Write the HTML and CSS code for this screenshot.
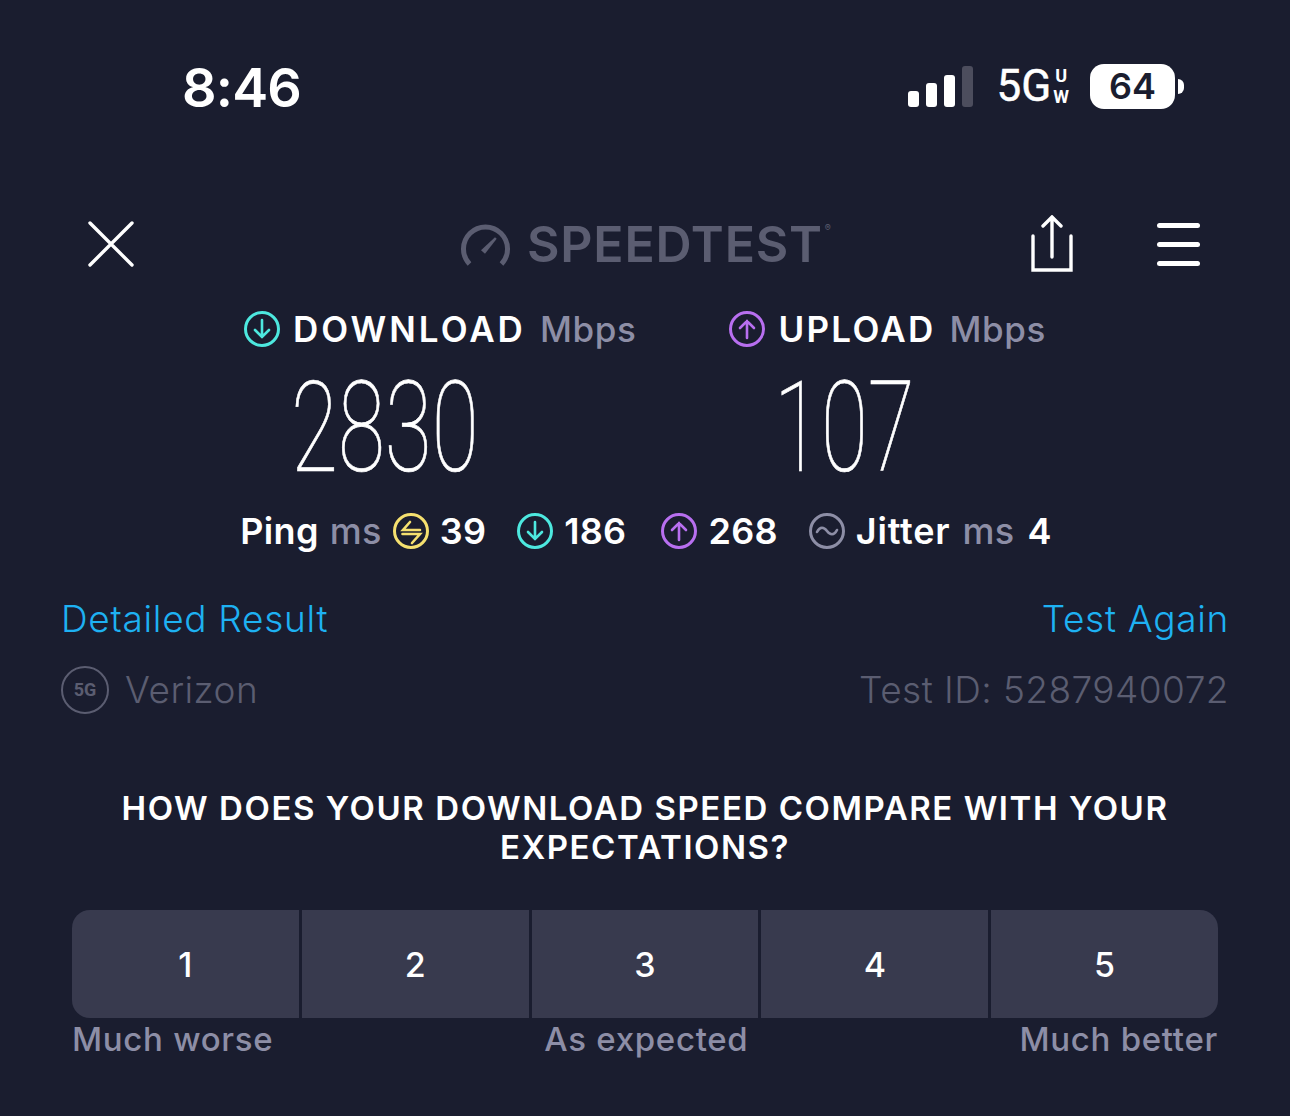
FILE: index.html
```html
<!DOCTYPE html>
<html lang="en">

<head>
    <meta charset="UTF-8">
    <meta name="viewport" content="width=device-width, initial-scale=1.0">
    <title>Speedtest Result</title>
    <link rel="stylesheet" href="styles.css">
</head>

<body>

    <!-- Status Bar -->
    <div class="status-bar">
        <div class="time">8:46</div>
        <div class="status-right">
            <div class="signal">
                <span class="bar bar-1"></span>
                <span class="bar bar-2"></span>
                <span class="bar bar-3"></span>
                <span class="bar bar-4"></span>
            </div>
            <div class="network">5G<span class="uw"><span>U</span><span>W</span></span></div>
            <div class="battery">
                <div class="battery-body">64</div>
                <div class="battery-cap"></div>
            </div>
        </div>
    </div>

    <!-- Navigation -->
    <nav class="navbar">
        <svg class="close-icon" width="46" height="46" viewBox="0 0 46 46">
            <path d="M2 2L44 44M44 2L2 44" />
        </svg>
        <div class="logo">
            <svg width="50" height="44" viewBox="0 0 50 44">
                <path class="logo-arc" d="M9.5 40A22 22 0 1 1 41.5 40" />
                <path class="logo-needle" d="M21 26.3L25 29.7L36.7 14.7L35 13.3Z" />
            </svg>
            <span class="logo-text">SPEEDTEST</span><span class="logo-mark">®</span>
        </div>
        <div class="nav-actions">
            <svg class="share-icon" width="44" height="58" viewBox="0 0 44 58">
                <path d="M21 2V42M12 11L21 2L30 11M2 21V55H40V21" />
            </svg>
            <div class="menu-icon">
                <span></span>
                <span></span>
                <span></span>
            </div>
        </div>
    </nav>

    <!-- Main Results -->
    <section class="results">
        <div class="result">
            <div class="result-head">
                <svg class="circle-icon icon-cyan" width="36" height="36" viewBox="0 0 36 36">
                    <circle cx="18" cy="18" r="16.5" />
                    <path d="M18 9V26M11 19L18 26L25 19" />
                </svg>
                <span class="head-name head-download">DOWNLOAD</span>
                <span class="head-unit">Mbps</span>
            </div>
            <div class="result-num">2830</div>
        </div>
        <div class="result">
            <div class="result-head">
                <svg class="circle-icon icon-purple" width="36" height="36" viewBox="0 0 36 36">
                    <circle cx="18" cy="18" r="16.5" />
                    <path d="M18 27V10M11 17L18 10L25 17" />
                </svg>
                <span class="head-name">UPLOAD</span>
                <span class="head-unit">Mbps</span>
            </div>
            <div class="result-num result-num-up">107</div>
        </div>
    </section>

    <!-- Ping Row -->
    <section class="stats">
        <div class="stat">
            <span>Ping</span>
            <span class="unit">ms</span>
            <svg class="circle-icon icon-yellow" width="36" height="36" viewBox="0 0 36 36">
                <circle cx="18" cy="18" r="16.5" />
                <path d="M27 17H10L17 9M9.5 21H27L19 30" />
            </svg>
            <span>39</span>
        </div>
        <div class="stat">
            <svg class="circle-icon icon-cyan" width="36" height="36" viewBox="0 0 36 36">
                <circle cx="18" cy="18" r="16.5" />
                <path d="M18 9V26M11 19L18 26L25 19" />
            </svg>
            <span>186</span>
        </div>
        <div class="stat stat-wide">
            <svg class="circle-icon icon-purple" width="36" height="36" viewBox="0 0 36 36">
                <circle cx="18" cy="18" r="16.5" />
                <path d="M18 27V10M11 17L18 10L25 17" />
            </svg>
            <span>268</span>
        </div>
        <div class="stat">
            <svg class="circle-icon icon-gray" width="36" height="36" viewBox="0 0 36 36">
                <circle cx="18" cy="18" r="16.5" />
                <path d="M8 19C11 13 15 14 18 18C21 22 25 23 28 17" />
            </svg>
            <span class="jitter">Jitter</span>
            <span class="unit">ms</span>
            <span class="jitter-val">4</span>
        </div>
    </section>

    <!-- Links -->
    <div class="links">
        <a href="#">Detailed Result</a>
        <a href="#">Test Again</a>
    </div>

    <div class="meta">
        <div class="carrier">
            <div class="carrier-badge">5G</div>
            <span>Verizon</span>
        </div>
        <div>Test ID: 5287940072</div>
    </div>

    <!-- Survey -->
    <section class="survey">
        <h2>HOW DOES YOUR DOWNLOAD SPEED COMPARE WITH YOUR EXPECTATIONS?</h2>
        <div class="rating">
            <button>1</button>
            <button>2</button>
            <button>3</button>
            <button>4</button>
            <button>5</button>
        </div>
        <div class="rating-labels">
            <span>Much worse</span>
            <span>As expected</span>
            <span>Much better</span>
        </div>
    </section>

</body>

</html>
```

FILE: styles.css
```css
/* General Styles */
body {
    font-family: "Inter", "Liberation Sans", sans-serif;
    margin: 0;
    padding: 0;
    width: 1290px;
    height: 1116px;
    overflow: hidden;
    background-color: #1a1d2f;
    color: white;
}

/* Status Bar */
.status-bar {
    display: flex;
    justify-content: space-between;
    align-items: center;
    height: 172px;
    padding: 0 106px 0 182px;
    box-sizing: border-box;
}

.time {
    margin-top: 3px;
    font-size: 54px;
    font-weight: 600;
    line-height: 1;
    letter-spacing: -0.8px;
}

.status-right {
    display: flex;
    align-items: center;
}

.signal {
    display: flex;
    align-items: flex-end;
    gap: 7px;
    height: 41px;
}

.bar {
    width: 11px;
    border-radius: 3px;
    background-color: white;
}

.bar-1 { height: 16px; }
.bar-2 { height: 24px; }
.bar-3 { height: 32px; }
.bar-4 { height: 41px; background-color: #4c4d5d; }

.network {
    display: flex;
    align-items: center;
    margin-left: 24px;
    font-family: "Roboto", sans-serif;
    font-size: 44px;
    line-height: 1;
    -webkit-text-stroke: 0.5px white;
}

.uw {
    display: flex;
    flex-direction: column;
    margin-left: 2px;
    font-size: 18px;
    font-weight: 700;
    line-height: 21px;
    text-align: center;
    -webkit-text-stroke: 0;
}

.battery {
    display: flex;
    align-items: center;
    margin-left: 21px;
}

.battery-body {
    width: 85px;
    height: 45px;
    border-radius: 14px;
    background-color: white;
    color: #1a1d2f;
    font-size: 36px;
    font-weight: 600;
    line-height: 45px;
    text-align: center;
}

.battery-cap {
    width: 6px;
    height: 15px;
    margin-left: 3px;
    border-radius: 0 8px 8px 0;
    background-color: white;
}

/* Navigation */
.navbar {
    display: flex;
    align-items: center;
    justify-content: space-between;
    height: 72px;
    padding: 0 90px 0 88px;
    margin-top: 36px;
    position: relative;
}

.close-icon path {
    fill: none;
    stroke: white;
    stroke-width: 3.4;
    stroke-linecap: round;
}

.logo {
    position: absolute;
    left: 460px;
    top: 14px;
    display: flex;
    align-items: center;
    gap: 17px;
    color: #5b5d71;
}

.logo-arc {
    fill: none;
    stroke: #5b5d71;
    stroke-width: 5;
}

.logo-needle {
    fill: #5b5d71;
}

.logo-text {
    margin-top: -3px;
    font-size: 50px;
    font-weight: 600;
    line-height: 1;
    letter-spacing: 0.8px;
}

.logo-mark {
    position: absolute;
    right: -8px;
    top: 0;
    font-size: 9px;
}

.nav-actions {
    display: flex;
    align-items: center;
    gap: 82px;
}

.share-icon path {
    fill: none;
    stroke: white;
    stroke-width: 3.4;
    stroke-linecap: round;
}

.menu-icon {
    display: flex;
    flex-direction: column;
    gap: 14px;
    width: 43px;
}

.menu-icon span {
    height: 5px;
    border-radius: 3px;
    background-color: white;
}

/* Circle Icons */
.circle-icon {
    flex-shrink: 0;
}

.circle-icon circle,
.circle-icon path {
    fill: none;
    stroke-width: 3;
    stroke-linecap: round;
}

.circle-icon path {
    stroke-width: 2.6;
}

.icon-cyan circle, .icon-cyan path { stroke: #4de8df; }
.icon-purple circle, .icon-purple path { stroke: #b86ff0; }
.icon-yellow circle, .icon-yellow path { stroke: #f5e06f; }
.icon-gray circle, .icon-gray path { stroke: #8d8ea6; }

/* Main Results */
.results {
    display: flex;
    justify-content: center;
    gap: 93px;
    margin-top: 25px;
}

.result-head {
    display: flex;
    align-items: center;
    height: 48px;
    font-size: 35px;
    line-height: 1;
}

.head-name {
    margin-left: 13px;
    font-weight: 600;
    letter-spacing: 2.3px;
}

.head-download {
    letter-spacing: 3px;
}

.head-unit {
    margin-left: 14px;
    font-weight: 500;
    letter-spacing: 0.6px;
    color: #8d8ea6;
}

.result-num {
    margin: 19px 0 0 47px;
    font-family: "Roboto", sans-serif;
    font-size: 126px;
    font-weight: 100;
    line-height: 112px;
    transform: scaleX(0.68);
    transform-origin: left center;
    white-space: nowrap;
    -webkit-text-stroke: 0.7px white;
}

.result-num-up {
    margin-left: 45px;
}

/* Ping Row */
.stats {
    display: flex;
    justify-content: center;
    gap: 31px;
    margin-top: 23px;
    padding-left: 2px;
    font-size: 36px;
    font-weight: 600;
    line-height: 48px;
    letter-spacing: 0.3px;
}

.stat {
    display: flex;
    align-items: center;
    gap: 11px;
}

.stat-wide {
    margin-left: 4px;
}

.unit {
    color: #8d8ea6;
    font-weight: 500;
}

.jitter {
    letter-spacing: 0.8px;
    margin-right: 1px;
}

.jitter-val {
    margin-left: 2px;
}

/* Links */
.links,
.meta {
    display: flex;
    justify-content: space-between;
    font-size: 37px;
    font-weight: 300;
    line-height: 48px;
}

.links {
    padding: 0 61px 0 61px;
    margin-top: 40px;
    letter-spacing: 0.7px;
}

.links a {
    color: #1eb1f2;
    text-decoration: none;
}

.meta {
    align-items: center;
    height: 50px;
    padding: 0 61px;
    margin-top: 22px;
    color: #5b5d71;
    letter-spacing: 0.45px;
}

.carrier {
    display: flex;
    align-items: center;
    gap: 16px;
}

.carrier-badge {
    width: 44px;
    height: 44px;
    border: 2.5px solid #5b5d71;
    border-radius: 50%;
    font-family: "Roboto", sans-serif;
    font-size: 18px;
    font-weight: 700;
    line-height: 44px;
    letter-spacing: 0;
    text-align: center;
}

/* Survey */
.survey {
    margin-top: 74px;
    padding: 0 72px;
}

.survey h2 {
    margin: 0 auto;
    width: 1100px;
    font-size: 33px;
    font-weight: 600;
    line-height: 39px;
    letter-spacing: 1.55px;
    text-align: center;
}

.rating {
    display: flex;
    gap: 3px;
    margin-top: 43px;
    border-radius: 18px;
    overflow: hidden;
}

.rating button {
    flex: 1;
    height: 108px;
    padding: 0;
    border: none;
    background-color: #383a4e;
    color: white;
    font-family: inherit;
    font-size: 34px;
    font-weight: 500;
}

.rating-labels {
    display: flex;
    justify-content: space-between;
    margin-top: 1px;
    font-size: 33px;
    font-weight: 500;
    line-height: 40px;
    letter-spacing: 0.7px;
    color: #8d8ea6;
}
```
